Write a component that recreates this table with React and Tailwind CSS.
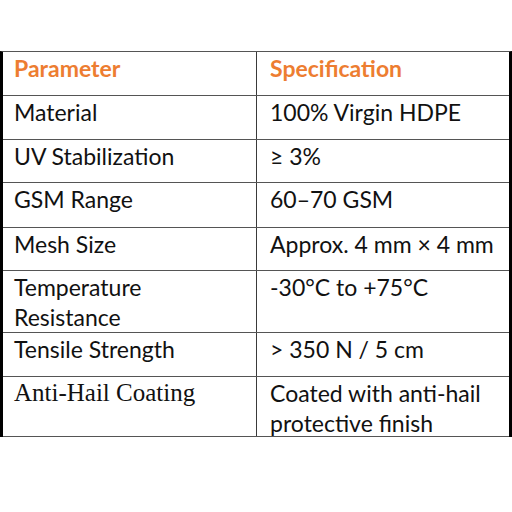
const rows = [
  { p: "Material", s: "100% Virgin HDPE", h: "h-[44px]" },
  { p: "UV Stabilization", s: "≥ 3%", h: "h-[43px]" },
  { p: "GSM Range", s: "60–70 GSM", h: "h-[45px]" },
  { p: "Mesh Size", s: "Approx. 4 mm × 4 mm", h: "h-[43px]" },
  { p: ["Temperature", "Resistance"], s: "-30°C to +75°C", h: "h-[62px]" },
  { p: "Tensile Strength", s: "> 350 N / 5 cm", h: "h-[44px]" },
  { p: "Anti-Hail Coating", s: ["Coated with anti-hail", "protective finish"], h: "h-[60px]", serif: true }
];

function Cell({ children, first, serif, head }) {
  const lines = Array.isArray(children) ? children : [children];
  return (
    <div
      className={
        (first ? "w-[254px] border-r border-[#3a3a3a] pl-[11px] " : "flex-1 pl-[13px] ") +
        "pt-[1px] leading-[30px] " +
        (head ? "font-bold text-[#ed7d31] " : "text-[#111] ") +
        (serif ? "font-['Liberation_Serif',serif] text-[25px]" : "text-[23px]")
      }
    >
      {lines.map((l) => (
        <div key={l}>{l}</div>
      ))}
    </div>
  );
}

export default function App() {
  return (
    <div className="w-[512px] h-[512px] bg-white pt-[51px] font-['Lato',sans-serif]">
      <div className="border-x-[3px] border-black border-t border-t-[#555]">
        <div className="flex h-[44px] border-b border-[#555]">
          <Cell first head>Parameter</Cell>
          <Cell head>Specification</Cell>
        </div>
        {rows.map((r) => (
          <div key={r.s} className={"flex border-b border-[#555] " + r.h}>
            <Cell first serif={r.serif}>{r.p}</Cell>
            <Cell>{r.s}</Cell>
          </div>
        ))}
      </div>
    </div>
  );
}
